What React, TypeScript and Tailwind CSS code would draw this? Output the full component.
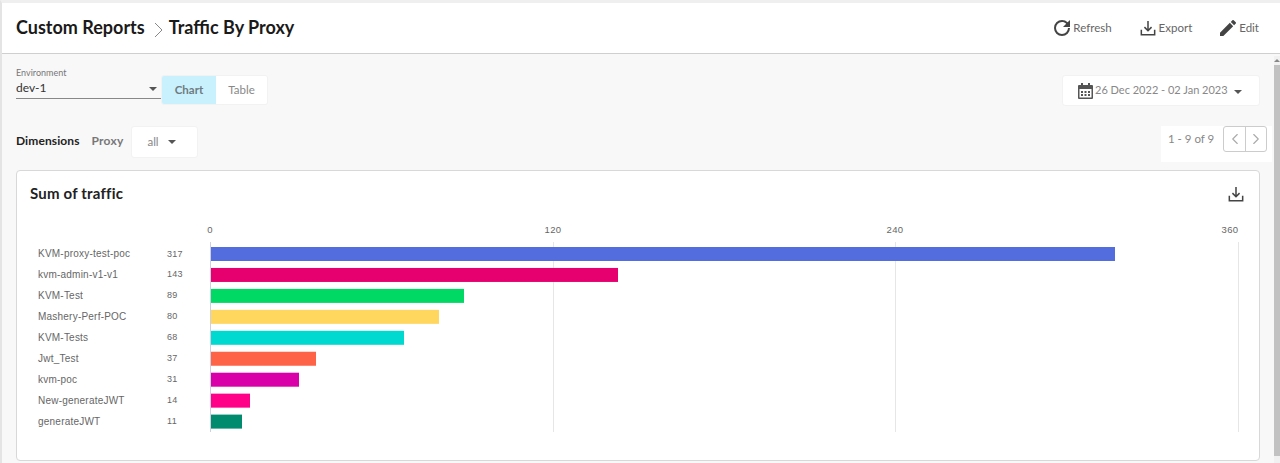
import React from "react";
import { ChevronLeft, ChevronRight } from "lucide-react";

const rows = [
  { name: "KVM-proxy-test-poc", v: 317, c: "#536dde", w: 904 },
  { name: "kvm-admin-v1-v1", v: 143, c: "#e6006f", w: 407 },
  { name: "KVM-Test", v: 89, c: "#00d964", w: 253 },
  { name: "Mashery-Perf-POC", v: 80, c: "#ffd75e", w: 228 },
  { name: "KVM-Tests", v: 68, c: "#00d9d0", w: 193 },
  { name: "Jwt_Test", v: 37, c: "#ff6347", w: 105 },
  { name: "kvm-poc", v: 31, c: "#d900a9", w: 88 },
  { name: "New-generateJWT", v: 14, c: "#ff0088", w: 39 },
  { name: "generateJWT", v: 11, c: "#008a6e", w: 31 },
];

const ticks = [
  { x: 210, label: "0" },
  { x: 553, label: "120" },
  { x: 895, label: "240" },
  { x: 1238, label: "360" },
];

function Caret() {
  return <span className="inline-block w-0 h-0 border-x-[4px] border-x-transparent border-t-[4px] border-t-[#555]" />;
}

function ExportIcon({ size = 18 }: { size?: number }) {
  return (
    <svg width={size} height={size} viewBox="0 0 18 18" fill="none" stroke="#444" strokeWidth="1.7">
      <path d="M9 1v10.5M5 8l4 4 4-4" />
      <path d="M1.5 11v5.5h15V11" />
    </svg>
  );
}

export default function App() {
  return (
    <div className="h-[463px] w-[1280px] overflow-hidden bg-[#f8f8f8] font-['Lato','Liberation_Sans',sans-serif] flex flex-col border-l-[2px] border-l-[#e4e4e4] border-t-[3px] border-t-[#efefef]">
      <header className="h-[51px] shrink-0 bg-white border-b border-b-[#cfcfcf] flex items-center pl-[14px] pr-[21px]">
        <span className="text-[18px] font-bold text-[#1a1a1a] -mt-[2px]">Custom Reports</span>
        <svg width="9" height="16" viewBox="0 0 9 16" fill="none" stroke="#888" strokeWidth="1" className="ml-[9px] mr-[6px] mt-[3px]">
          <path d="M1 1l7 7-7 7" />
        </svg>
        <span className="text-[18px] font-bold text-[#1a1a1a] -mt-[2px]">Traffic By Proxy</span>
        <div className="ml-auto flex items-center text-[11.5px] text-[#666]">
          <svg width="16" height="16" viewBox="4 4 16 16" fill="#444" className="mr-[3px]">
            <path d="M17.65 6.35A7.95 7.95 0 0012 4a8 8 0 108 8h-2a6 6 0 11-6-6c1.66 0 3.14.69 4.22 1.78L13 11h7V4l-2.35 2.35z" />
          </svg>
          <span>Refresh</span>
          <span className="ml-[28px] mr-[3px]"><ExportIcon size={16} /></span>
          <span>Export</span>
          <svg width="16" height="16" viewBox="3 3 18 18" fill="#444" className="ml-[28px] mr-[3px]">
            <path d="M3 17.25V21h3.75L17.81 9.94l-3.75-3.75L3 17.25zM20.71 7.04a1 1 0 000-1.41l-2.34-2.34a1 1 0 00-1.41 0l-1.83 1.83 3.75 3.75 1.83-1.83z" />
          </svg>
          <span>Edit</span>
        </div>
      </header>

      <main className="relative flex-1 pl-[14px] pr-[20px] pt-[13px]">
        <div className="absolute right-0 top-[2px] bottom-0 w-[6px] bg-[#f1f1f1] flex flex-col items-center">
          <span className="mt-[3px] w-0 h-0 border-x-[3px] border-x-transparent border-b-[3px] border-b-[#888]" />
          <div className="mt-[3px] w-full h-[391px] bg-[#c2c2c2]" />
        </div>
        <div className="flex items-start">
          <div className="w-[145px]">
            <div className="text-[9px] leading-[11px] text-[#777]">Environment</div>
            <div className="flex items-center justify-between h-[21px] border-b border-b-[#888] text-[12px] text-[#333]">
              <span>dev-1</span>
              <span className="mb-[3px] mr-[4px]"><Caret /></span>
            </div>
          </div>
          <div className="mt-[8px] flex h-[30px] text-[11.5px] rounded-[3px] overflow-hidden border border-[#f2f2f2]">
            <div className="w-[54px] bg-[#c9f1fd] flex items-center justify-center font-bold text-[#6f7b80]">Chart</div>
            <div className="w-[51px] bg-white flex items-center justify-center text-[#888]">Table</div>
          </div>
          <div className="ml-auto mt-[8px] w-[198px] h-[31px] bg-white rounded-[3px] flex items-center pl-[15px] gap-[2px] text-[11px] text-[#888] border border-[#f2f2f2]">
            <svg width="15" height="16" viewBox="0 0 15 16" fill="#555">
              <path d="M3 0h2v2h5V0h2v2h2a1 1 0 011 1v12a1 1 0 01-1 1H1a1 1 0 01-1-1V3a1 1 0 011-1h2V0zM1.5 6v8.5h12V6h-12z" />
              <path d="M3 8h2v2H3zM6.5 8h2v2h-2zM10 8h2v2h-2zM3 11h2v2H3zM6.5 11h2v2h-2zM10 11h2v2h-2z" />
            </svg>
            <span>26 Dec 2022 - 02 Jan 2023</span>
            <span className="ml-[4px]"><Caret /></span>
          </div>
        </div>

        <div className="flex items-start mt-[20px] h-[38px]">
          <span className="text-[12px] font-bold text-[#222] mt-[6px] tracking-[0.1px]">Dimensions</span>
          <span className="text-[12px] font-bold text-[#777] ml-[12px] mt-[6px] tracking-[0.2px]">Proxy</span>
          <div className="ml-[8px] w-[67px] h-[32px] bg-white rounded-[3px] flex items-center justify-start pl-[15px] gap-[9px] text-[11.5px] text-[#888] border border-[#f2f2f2]">
            <span>all</span>
            <Caret />
          </div>
          <div className="ml-auto mr-[-12px] h-[36px] w-[111px] bg-white flex items-start text-[11.5px] text-[#888] pl-[7px]">
            <span className="mt-[4px]">1 - 9 of 9</span>
            <div className="ml-[9px] flex h-[26px] w-[44px] border border-[#ccc] rounded-[3px] text-[#aaa]">
              <span className="flex-1 flex items-center justify-center border-r border-r-[#ccc]"><ChevronLeft size={18} strokeWidth={1.5} /></span>
              <span className="flex-1 flex items-center justify-center"><ChevronRight size={18} strokeWidth={1.5} /></span>
            </div>
          </div>
        </div>

        <section className="mt-[6px] h-[291px] bg-white border border-[#d8d8d8] rounded-[4px] relative">
          <div className="flex items-center justify-between pl-[13px] pr-[15px] h-[46px]">
            <h2 className="text-[15px] font-bold text-[#222] tracking-[0.2px] -mt-[2px]">Sum of traffic</h2>
            <ExportIcon size={16} />
          </div>
          <svg className="absolute left-[-17px] top-[-171px] pointer-events-none" width="1280" height="463" style={{ fontFamily: "'Liberation Sans', sans-serif" }}>
            {ticks.map((t, i) => (
              <g key={t.label}>
                <line x1={t.x + 0.5} x2={t.x + 0.5} y1={242} y2={432} stroke={i === 0 ? "#ccd0e0" : "#e6e6e6"} />
                <text x={i === 3 ? t.x - 8 : t.x} y={233} fontSize={9.5} letterSpacing={0.4} fill="#666" textAnchor="middle">{t.label}</text>
              </g>
            ))}
            {rows.map((r, i) => {
              const y = 247 + i * 20.95;
              return (
                <g key={r.name}>
                  <text x={38} y={y + 10} fontSize={10} letterSpacing={0.22} fill="#666">{r.name}</text>
                  <text x={167} y={y + 9.5} fontSize={9} letterSpacing={0.3} fill="#666">{r.v}</text>
                  <rect x={211} y={y} width={r.w} height={14} fill={r.c} />
                </g>
              );
            })}
          </svg>
        </section>
      </main>
    </div>
  );
}
